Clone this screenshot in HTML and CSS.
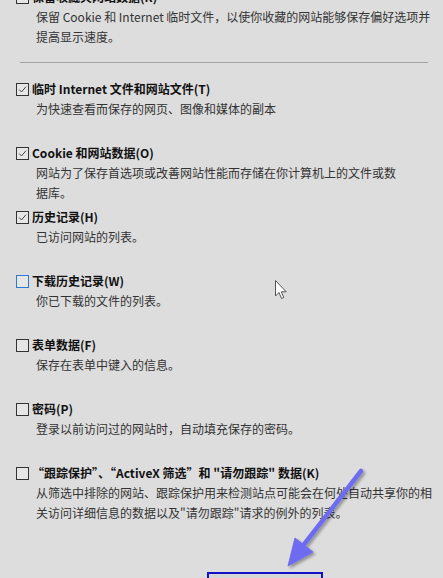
FILE: index.html
```html
<!DOCTYPE html>
<html lang="zh-CN">
<head>
<meta charset="utf-8">
<link rel="stylesheet" href="styles.css">
</head>
<body>
<div class="page">
  <div class="item first">
    <div class="row"><span class="box checked"><svg viewBox="0 0 13 13"><path d="M2.5 6.5 L5.3 9.4 L10.6 3.2" /></svg></span><span class="label">保留收藏夹网站数据(R)</span></div>
    <div class="desc">保留 Cookie 和 Internet 临时文件，以使你收藏的网站能够保存偏好选项并<br>提高显示速度。</div>
  </div>
  <div class="sep"></div>
  <div class="item">
    <div class="row"><span class="box checked"><svg viewBox="0 0 13 13"><path d="M2.5 6.5 L5.3 9.4 L10.6 3.2" /></svg></span><span class="label">临时 Internet 文件和网站文件(T)</span></div>
    <div class="desc">为快速查看而保存的网页、图像和媒体的副本</div>
  </div>
  <div class="item">
    <div class="row"><span class="box checked"><svg viewBox="0 0 13 13"><path d="M2.5 6.5 L5.3 9.4 L10.6 3.2" /></svg></span><span class="label">Cookie 和网站数据(O)</span></div>
    <div class="desc">网站为了保存首选项或改善网站性能而存储在你计算机上的文件或数<br>据库。</div>
  </div>
  <div class="item">
    <div class="row"><span class="box checked"><svg viewBox="0 0 13 13"><path d="M2.5 6.5 L5.3 9.4 L10.6 3.2" /></svg></span><span class="label">历史记录(H)</span></div>
    <div class="desc">已访问网站的列表。</div>
  </div>
  <div class="item">
    <div class="row"><span class="box hover"></span><span class="label">下载历史记录(W)</span></div>
    <div class="desc">你已下载的文件的列表。</div>
  </div>
  <div class="item">
    <div class="row"><span class="box"></span><span class="label">表单数据(F)</span></div>
    <div class="desc">保存在表单中键入的信息。</div>
  </div>
  <div class="item">
    <div class="row"><span class="box"></span><span class="label">密码(P)</span></div>
    <div class="desc">登录以前访问过的网站时，自动填充保存的密码。</div>
  </div>
  <div class="item">
    <div class="row"><span class="box"></span><span class="label">“跟踪保护”、“ActiveX 筛选”和 "请勿跟踪" 数据(K)</span></div>
    <div class="desc">从筛选中排除的网站、跟踪保护用来检测站点可能会在何处自动共享你的相<br>关访问详细信息的数据以及"请勿跟踪"请求的例外的列表。</div>
  </div>
  <div class="btn"></div>

  <svg class="cursor" viewBox="0 0 13 21" width="13" height="21">
    <path d="M0.5 0.5 L0.5 16 L4 12.5 L6.5 18.5 L8.8 17.5 L6.3 11.8 L11.2 11.8 Z" fill="#ffffff" stroke="#555" stroke-width="1"/>
  </svg>

  <svg class="arrow" viewBox="0 0 443 578" width="443" height="578">
    <defs>
      <filter id="sh" x="-20%" y="-20%" width="140%" height="140%">
        <feGaussianBlur in="SourceAlpha" stdDeviation="1.6"/>
        <feOffset dx="1.5" dy="1.5" result="b"/>
        <feComponentTransfer><feFuncA type="linear" slope="0.35"/></feComponentTransfer>
        <feMerge><feMergeNode/><feMergeNode in="SourceGraphic"/></feMerge>
      </filter>
    </defs>
    <g filter="url(#sh)" fill="#6d6cf0" stroke="#6d6cf0">
      <path d="M361 471 L302 547" stroke-width="4.5" stroke-linecap="round" fill="none"/>
      <path d="M288 566 L295 538 L313 552 Z" stroke-width="1" stroke-linejoin="round"/>
    </g>
  </svg>
</div>
</body>
</html>
```

FILE: styles.css
```css
html, body {
  margin: 0;
  padding: 0;
  background: #dddddd;
  overflow: hidden;
}
.page {
  position: relative;
  width: 443px;
  height: 578px;
  overflow: hidden;
  font-family: "Noto Sans CJK SC", "Microsoft YaHei", sans-serif;
  font-size: 12px;
  color: #333;
}
.item {
  height: 64px;
}
.item.first {
  height: auto;
  margin-top: -13px;
}
.row {
  display: flex;
  align-items: center;
  height: 20px;
  padding-left: 16px;
  gap: 3px;
}
.box {
  width: 11px;
  height: 11px;
  border: 1px solid #333;
  background: #e6e6e6;
  flex: none;
  display: flex;
}
.box svg {
  width: 11px;
  height: 11px;
}
.box svg path {
  fill: none;
  stroke: #333;
  stroke-width: 1.1;
}
.box.hover {
  border-color: #2a7bd6;
}
.label {
  font-weight: bold;
  color: #111;
  white-space: nowrap;
  line-height: 20px;
}
.desc {
  padding-left: 36px;
  line-height: 20px;
  white-space: nowrap;
  color: #333;
}
.sep {
  height: 1px;
  background: #a3a3a3;
  margin: 15px 15px 16px 20px;
}
.btn {
  margin-top: 45px;
  margin-left: 207px;
  width: 112px;
  height: 20px;
  border: 2px solid #1212c4;
  background: #d6d6d6;
}
.cursor {
  position: absolute;
  left: 275px;
  top: 280px;
}
.arrow {
  position: absolute;
  left: 0;
  top: 0;
  pointer-events: none;
}
```
